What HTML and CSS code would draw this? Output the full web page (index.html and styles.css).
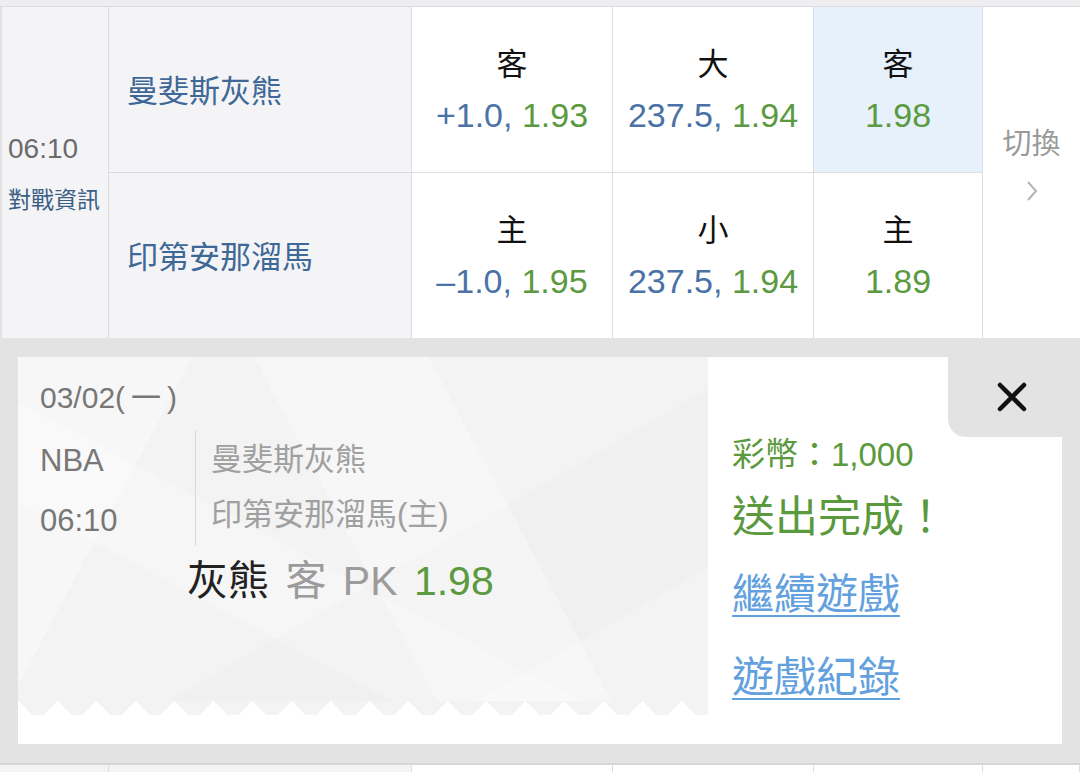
FILE: index.html
```html
<!DOCTYPE html>
<html lang="zh-Hant">
<head>
    <meta charset="UTF-8">
    <meta name="viewport" content="width=device-width, initial-scale=1.0">
    <link rel="stylesheet" href="styles.css">
    <title>NBA 投注</title>
</head>
<body>
    <div class="prev-row"></div>

    <div class="match">
        <div class="cell time">
            <div class="kickoff">06:10</div>
            <div class="info-link">對戰資訊</div>
        </div>
        <div class="cell team">曼斐斯灰熊</div>
        <div class="cell odds">
            <div class="label">客</div>
            <div class="value"><span class="line">+1.0,</span> <span class="price">1.93</span></div>
        </div>
        <div class="cell odds">
            <div class="label">大</div>
            <div class="value"><span class="line">237.5,</span> <span class="price">1.94</span></div>
        </div>
        <div class="cell odds picked">
            <div class="label">客</div>
            <div class="value"><span class="price">1.98</span></div>
        </div>
        <div class="cell switch">
            <div class="switch-label">切換</div>
            <svg class="chevron" width="12" height="22" viewBox="0 0 12 22">
                <polyline points="2,2 10,11 2,20" fill="none" stroke="#b4b4b4" stroke-width="2"/>
            </svg>
        </div>

        <div class="cell team">印第安那溜馬</div>
        <div class="cell odds">
            <div class="label">主</div>
            <div class="value"><span class="line">–1.0,</span> <span class="price">1.95</span></div>
        </div>
        <div class="cell odds">
            <div class="label">小</div>
            <div class="value"><span class="line">237.5,</span> <span class="price">1.94</span></div>
        </div>
        <div class="cell odds">
            <div class="label">主</div>
            <div class="value"><span class="price">1.89</span></div>
        </div>
    </div>

    <div class="overlay">
        <div class="card">
            <div class="ticket">
                <div class="ticket-body">
                    <div class="date">03/02<span class="weekday">(一)</span></div>
                    <div class="game">
                        <div class="meta">
                            <div>NBA</div>
                            <div>06:10</div>
                        </div>
                        <div class="teams">
                            <div>曼斐斯灰熊</div>
                            <div>印第安那溜馬(主)</div>
                        </div>
                    </div>
                    <div class="pick">
                        <span class="pick-team">灰熊</span>
                        <span class="pick-type">客 PK</span>
                        <span class="price">1.98</span>
                    </div>
                </div>
                <div class="ticket-edge"></div>
            </div>

            <div class="result">
                <div class="close-row">
                    <div class="close">
                        <svg width="30" height="30" viewBox="0 0 30 30">
                            <path d="M3 3 L27 27 M27 3 L3 27" stroke="#111" stroke-width="4.5" stroke-linecap="round"/>
                        </svg>
                    </div>
                </div>
                <div class="coins">彩幣：1,000</div>
                <div class="done">送出完成！</div>
                <a class="link first" href="#">繼續遊戲</a>
                <a class="link" href="#">遊戲紀錄</a>
            </div>
        </div>
    </div>

    <div class="next-row">
        <div class="gray"></div>
        <div class="gray"></div>
        <div></div>
        <div></div>
        <div></div>
        <div></div>
    </div>
</body>
</html>
```

FILE: styles.css
```css
body {
    margin: 0;
    width: 1080px;
    height: 772px;
    overflow: hidden;
    font-family: 'Liberation Sans', 'Noto Sans CJK TC', sans-serif;
    background-color: #e3e3e3;
}

.prev-row {
    height: 6px;
    background-color: #eeeef0;
    border-bottom: 1px solid #dcdcde;
}

/* match table */
.match {
    display: grid;
    grid-template-columns: 109px 303px 201px 201px 169px 97px;
    grid-template-rows: 166px 165px;
    background-color: #fff;
}

.cell {
    box-sizing: border-box;
    border-right: 1px solid #dcdde0;
    border-bottom: 1px solid #dcdde0;
}

.match > .cell:nth-child(n+7) {
    border-bottom: none;
}

.time {
    grid-row: span 2;
    border-bottom: none;
    border-left: 2px solid #e2e2e5;
    background-color: #f4f4f6;
    display: flex;
    flex-direction: column;
    justify-content: center;
    padding-left: 6px;
}

.kickoff {
    font-size: 28px;
    line-height: 36px;
    color: #6b6b6b;
}

.info-link {
    font-size: 23px;
    line-height: 30px;
    margin-top: 18px;
    color: #3c5f86;
}

.team {
    background-color: #f4f4f6;
    display: flex;
    align-items: center;
    padding-left: 18px;
    padding-bottom: 3px;
    font-size: 31px;
    color: #3e6896;
}

.odds {
    display: flex;
    flex-direction: column;
    align-items: center;
    justify-content: center;
}

.odds .label {
    font-size: 31px;
    line-height: 50px;
    color: #111;
}

.odds .value {
    font-size: 34px;
    line-height: 50px;
    white-space: nowrap;
}

.odds.picked {
    background-color: #e6f1fb;
}

.line {
    color: #4a72a6;
}

.price {
    color: #5b9a3f;
}

.switch {
    grid-column: 6;
    grid-row: 1 / span 2;
    border-right: none;
    border-bottom: none;
    display: flex;
    flex-direction: column;
    align-items: center;
    justify-content: center;
    padding-bottom: 20px;
}

.switch-label {
    font-size: 29px;
    line-height: 40px;
    color: #9a9a9a;
}

.chevron {
    margin-top: 16px;
}

/* result popup */
.overlay {
    padding: 19px 18px;
}

.card {
    display: flex;
    height: 387px;
    background-color: #fff;
}

.ticket {
    width: 690px;
    display: flex;
    flex-direction: column;
}

.ticket-body {
    box-sizing: border-box;
    height: 344px;
    padding: 21px 22px 0;
    background-color: #f3f3f3;
    background-image:
        linear-gradient(118deg, rgba(255, 255, 255, 0.35) 0 20%, transparent 20%),
        linear-gradient(62deg, transparent 0 48%, rgba(255, 255, 255, 0.3) 48% 68%, transparent 68%),
        linear-gradient(150deg, transparent 0 58%, rgba(0, 0, 0, 0.012) 58% 82%, transparent 82%),
        linear-gradient(28deg, transparent 0 28%, rgba(255, 255, 255, 0.25) 28% 42%, transparent 42%);
}

.ticket-edge {
    height: 14px;
    background: conic-gradient(from 134deg at 50% 0, #fff 92deg, #f3f3f3 0) 20px 0 / 39px 14px repeat-x;
}

.date {
    font-size: 30px;
    line-height: 40px;
    color: #777;
}

.weekday {
    letter-spacing: 6px;
}

.game {
    display: flex;
    margin-top: 12px;
}

.meta {
    width: 155px;
    border-right: 1px solid #d8d8d8;
    padding-top: 6px;
    display: flex;
    flex-direction: column;
    gap: 10px;
    font-size: 31px;
    line-height: 50px;
    color: #777;
}

.teams {
    padding-left: 15px;
    padding-top: 5px;
    display: flex;
    flex-direction: column;
    gap: 5px;
    font-size: 31px;
    line-height: 50px;
    color: #a0a0a0;
}

.pick {
    margin-top: 10px;
    padding-left: 147px;
    font-size: 41px;
    line-height: 50px;
    word-spacing: 5px;
}

.pick-team {
    color: #222;
}

.pick-type {
    color: #9b9b9b;
}

.result {
    flex: 1;
    display: flex;
    flex-direction: column;
    align-items: flex-start;
    padding-left: 24px;
}

.close-row {
    align-self: stretch;
    display: flex;
    justify-content: flex-end;
}

.close {
    width: 114px;
    height: 80px;
    box-sizing: border-box;
    padding-left: 14px;
    background-color: #e3e3e3;
    border-bottom-left-radius: 18px;
    display: flex;
    align-items: center;
    justify-content: center;
}

.coins {
    font-size: 33px;
    line-height: 36px;
    color: #5a993c;
}

.done {
    margin-top: 16px;
    font-size: 43px;
    line-height: 56px;
    color: #5a993c;
}

.link {
    font-size: 42px;
    line-height: 56px;
    color: #62a0de;
    text-decoration: underline;
    text-decoration-thickness: 2px;
    text-underline-offset: 6px;
}

.link.first {
    margin-top: 22px;
}

.link + .link {
    margin-top: 27px;
}

.next-row {
    display: grid;
    grid-template-columns: 109px 303px 201px 201px 169px 97px;
    height: 7px;
    border-top: 2px solid #d6d6d8;
    background-color: #fff;
}

.next-row > div {
    border-right: 1px solid #dcdde0;
}

.next-row > .gray {
    background-color: #f4f4f6;
}
```
